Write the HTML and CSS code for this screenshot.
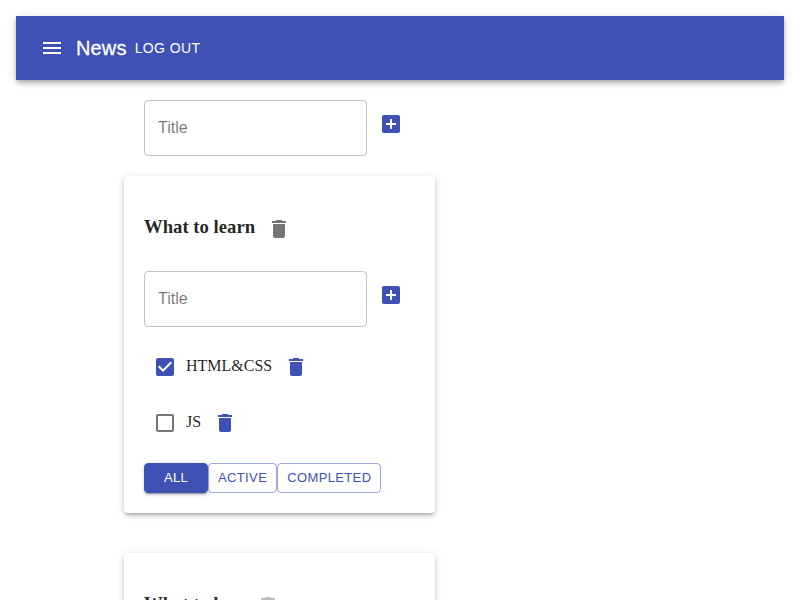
FILE: index.html
```html
<!DOCTYPE html>
<html lang="en">
<head>
<meta charset="utf-8">
<title>News</title>
<link rel="stylesheet" href="styles.css">
</head>
<body>
<svg class="defs" aria-hidden="true">
  <symbol id="add" viewBox="0 0 24 24"><path d="M19 3H5c-1.11 0-2 .9-2 2v14c0 1.1.89 2 2 2h14c1.1 0 2-.9 2-2V5c0-1.1-.9-2-2-2zm-2 10h-4v4h-2v-4H7v-2h4V7h2v4h4v2z"/></symbol>
  <symbol id="trash" viewBox="0 0 24 24"><path d="M6 19c0 1.1.9 2 2 2h8c1.1 0 2-.9 2-2V7H6v12zM19 4h-3.500l-1-1h-5l-1 1H5v2h14V4z"/></symbol>
  <symbol id="checked" viewBox="0 0 24 24"><path d="M19 3H5c-1.11 0-2 .9-2 2v14c0 1.1.89 2 2 2h14c1.110 0 2-.9 2-2V5c0-1.100-.89-2-2-2zm-9 14l-5-5 1.410-1.410L10 14.170l7.590-7.590L19 8l-9 9z"/></symbol>
  <symbol id="unchecked" viewBox="0 0 24 24"><path d="M19 5v14H5V5h14m0-2H5c-1.100 0-2 .9-2 2v14c0 1.100.9 2 2 2h14c1.100 0 2-.9 2-2V5c0-1.100-.9-2-2-2z"/></symbol>
  <symbol id="menu" viewBox="0 0 24 24"><path d="M3 18h18v-2H3v2zm0-5h18v-2H3v2zm0-7v2h18V6H3z"/></symbol>
</svg>
<header class="app-bar">
  <button class="icon-button menu"><svg><use href="#menu"/></svg></button>
  <h6 class="brand">News</h6>
  <button class="logout">LOG OUT</button>
</header>
<main class="container">
  <div class="add-form">
    <div class="field">Title</div>
    <button class="icon-button primary"><svg><use href="#add"/></svg></button>
  </div>
  <section class="paper">
    <h3 class="list-title"><span>What to learn</span><button class="icon-button"><svg><use href="#trash"/></svg></button></h3>
    <div class="add-form">
      <div class="field">Title</div>
      <button class="icon-button primary"><svg><use href="#add"/></svg></button>
    </div>
    <div class="tasks">
      <div class="task"><span class="icon-button small primary"><svg><use href="#checked"/></svg></span><span class="task-name">HTML&amp;CSS</span><button class="icon-button primary"><svg><use href="#trash"/></svg></button></div>
      <div class="task"><span class="icon-button small"><svg><use href="#unchecked"/></svg></span><span class="task-name">JS</span><button class="icon-button primary"><svg><use href="#trash"/></svg></button></div>
    </div>
    <div class="filters">
      <button class="filter active">ALL</button>
      <button class="filter">ACTIVE</button>
      <button class="filter">COMPLETED</button>
    </div>
  </section>
  <section class="paper">
    <h3 class="list-title disabled"><span>What to buy</span><button class="icon-button"><svg><use href="#trash"/></svg></button></h3>
  </section>
</main>
</body>
</html>
```
FILE: styles.css
```css
* { box-sizing: border-box; }
html { height: 100%; overflow: hidden; }
body {
  height: 100%;
  margin: 0;
  padding: 16px;
  overflow: hidden;
  background: #fff;
  color: rgba(0, 0, 0, 0.87);
  font: 16px "Liberation Serif", serif;
}
button { border: 0; margin: 0; padding: 0; background: none; color: inherit; }
.defs { display: none; }
.app-bar {
  display: flex;
  align-items: center;
  height: 64px;
  padding: 0 12px;
  background: #3f51b5;
  color: #fff;
  box-shadow: 0 2px 4px -1px rgba(0,0,0,.2), 0 4px 5px rgba(0,0,0,.14), 0 1px 10px rgba(0,0,0,.12);
}
.icon-button {
  display: flex;
  flex: none;
  align-items: center;
  justify-content: center;
  width: 48px;
  height: 48px;
  color: rgba(0, 0, 0, 0.54);
}
.icon-button svg { width: 24px; height: 24px; fill: currentColor; }
.icon-button.primary { color: #3f51b5; }
.icon-button.menu { color: #fff; }
.icon-button.small { width: 42px; height: 42px; }
.brand {
  margin: 0;
  font: 500 20px/32px "Liberation Sans", sans-serif;
  letter-spacing: 0.15px;
  -webkit-text-stroke: 0.3px currentColor;
}
.logout {
  padding: 6px 8px;
  font: 14px/24.5px "Liberation Sans", sans-serif;
  letter-spacing: 0.4px;
}
.container { padding: 20px 108px 0; }
.add-form { display: flex; align-items: flex-start; height: 56px; }
.field {
  width: 223px;
  height: 56px;
  padding: 0 13px;
  border: 1px solid rgba(0, 0, 0, 0.23);
  border-radius: 4px;
  color: rgba(0, 0, 0, 0.54);
  font: 16px/54px "Liberation Sans", sans-serif;
}
.container > .add-form { margin-left: 20px; }
.paper {
  width: 311px;
  height: 337px;
  margin: 20px 0 40px;
  padding: 20px;
  border-radius: 4px;
  background: #fff;
  box-shadow: 0 3px 3px -2px rgba(0,0,0,.2), 0 3px 4px rgba(0,0,0,.14), 0 1px 8px rgba(0,0,0,.12);
}
.list-title {
  display: flex;
  height: 48px;
  margin: 9px 0 18px;
  font-size: 18.72px;
  line-height: 44px;
}
.disabled .icon-button { color: rgba(0, 0, 0, 0.26); }
.tasks { padding-top: 16px; }
.task { display: flex; align-items: center; height: 48px; margin-bottom: 8px; }
.task-name { padding-bottom: 2px; }
.filters { display: flex; margin-top: 16px; }
.filter {
  height: 30px;
  padding: 0 9px;
  border: 1px solid rgba(63, 81, 181, 0.5);
  border-radius: 4px;
  color: #3f51b5;
  font: 13px/28px "Liberation Sans", sans-serif;
  letter-spacing: 0.37px;
}
.filter.active {
  width: 64px;
  border-color: #3f51b5;
  background: #3f51b5;
  color: #fff;
  box-shadow: 0 3px 1px -2px rgba(0,0,0,.2), 0 2px 2px rgba(0,0,0,.14), 0 1px 5px rgba(0,0,0,.12);
}
```
